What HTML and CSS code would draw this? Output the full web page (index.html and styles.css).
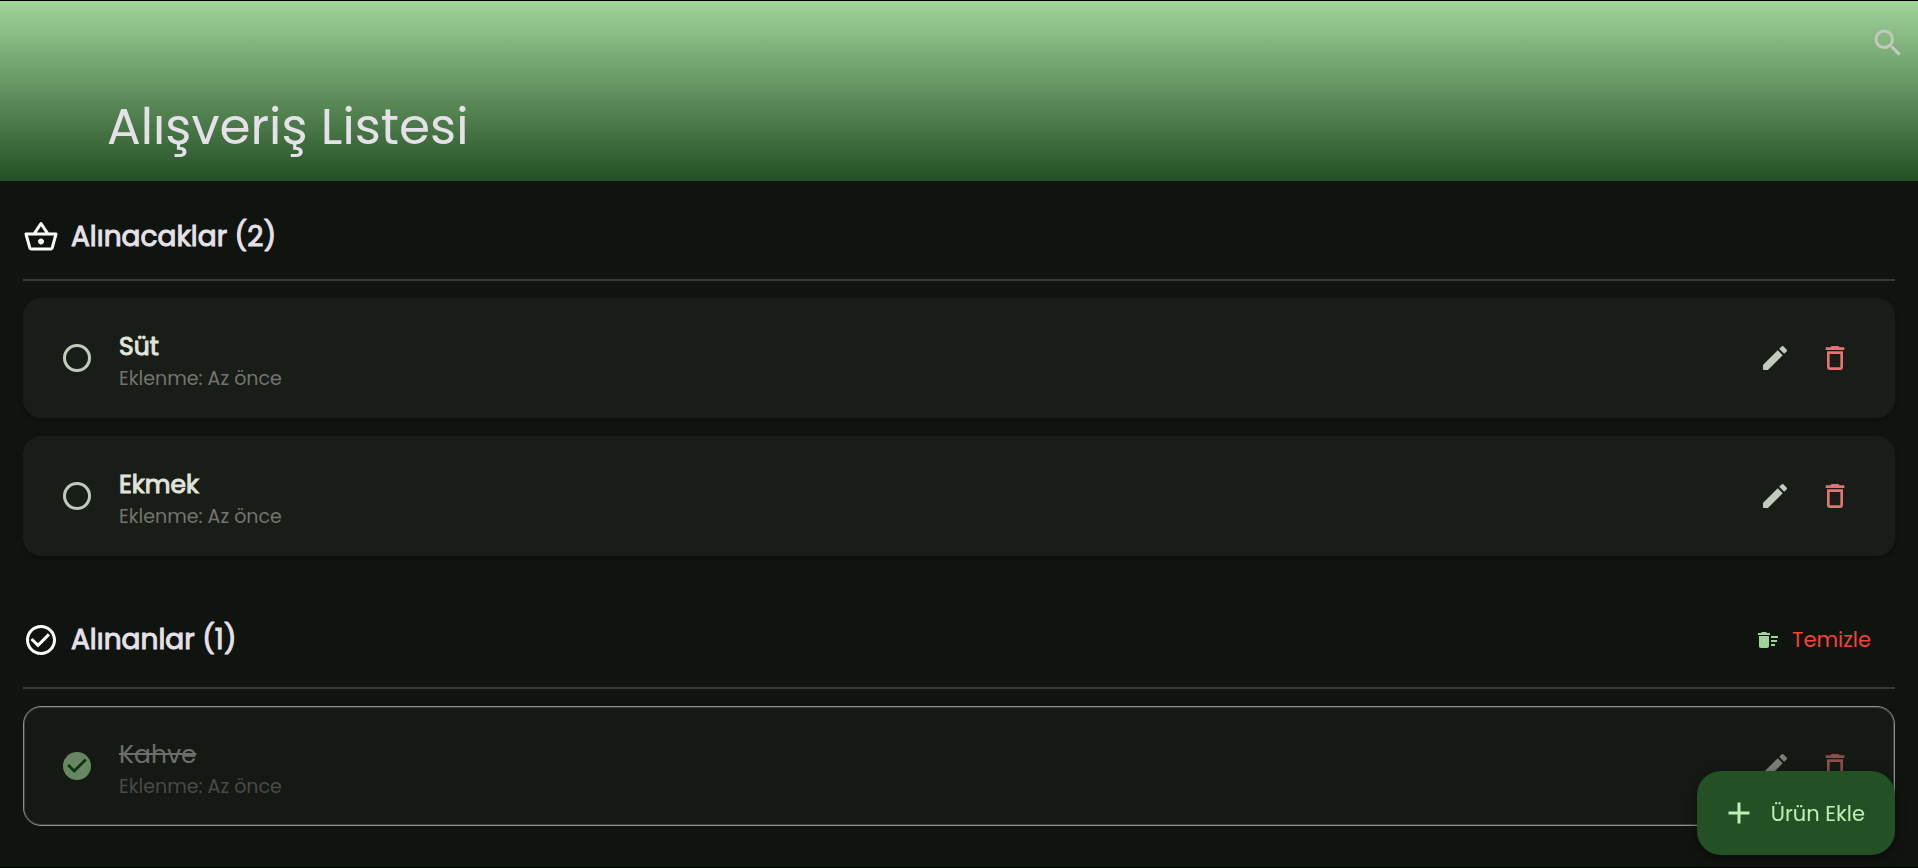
FILE: index.html
```html
<!DOCTYPE html>
<html lang="tr">
<head>
<meta charset="utf-8">
<meta name="viewport" content="width=device-width, initial-scale=1">
<title>Alışveriş Listesi</title>
<link rel="stylesheet" href="styles.css">
</head>
<body>
<svg class="sprite" aria-hidden="true">
  <symbol id="edit" viewBox="0 0 24 24"><path d="M3 17.46v3.04c0 .28.22.5.5.5h3.04c.13 0 .26-.05.35-.15L17.81 9.94l-3.75-3.75L3.15 17.1c-.1.1-.15.22-.15.36zM20.71 7.04c.39-.39.39-1.02 0-1.41l-2.34-2.34c-.39-.39-1.02-.39-1.41 0l-1.83 1.83 3.75 3.75 1.83-1.83z"/></symbol>
  <symbol id="delete" viewBox="0 0 24 24"><path d="M6 19c0 1.1.9 2 2 2h8c1.1 0 2-.9 2-2V7H6v12zM8 9h8v10H8V9zm7.5-5l-1-1h-5l-1 1H5v2h14V4h-3.5z"/></symbol>
</svg>

<header class="topbar">
  <h1 class="topbar-title">Alışveriş Listesi</h1>
  <button class="icon-button search" type="button" aria-label="Ara">
    <svg class="icon-lg" viewBox="0 0 24 24"><path d="M15.5 14h-.79l-.28-.27A6.471 6.471 0 0 0 16 9.5 6.5 6.5 0 1 0 9.5 16c1.61 0 3.09-.59 4.23-1.57l.27.28v.79l5 4.99L20.49 19l-4.99-5zm-6 0C7.01 14 5 11.99 5 9.5S7.01 5 9.5 5 14 7.01 14 9.5 11.99 14 9.5 14z"/></svg>
  </button>
</header>

<main class="content">
  <section class="group">
    <div class="group-head">
      <svg class="icon-lg" viewBox="0 0 24 24" aria-hidden="true"><path d="M22 9h-4.79l-4.38-6.56c-.19-.28-.51-.42-.83-.42s-.64.14-.83.43L6.79 9H2c-.55 0-1 .45-1 1 0 .09.01.18.04.27l2.54 9.27c.23.84 1 1.46 1.92 1.46h13c.92 0 1.69-.62 1.93-1.46l2.54-9.27L23 10c0-.55-.45-1-1-1zM12 4.8L14.8 9H9.2L12 4.8zM18.5 19l-12.99.01L3.31 11H20.7l-2.2 8zM12 13c-1.1 0-2 .9-2 2s.9 2 2 2 2-.9 2-2-.9-2-2-2z"/></svg>
      <h2 class="group-title">Alınacaklar (2)</h2>
    </div>
    <ul class="items">
      <li class="item">
        <input class="check" type="checkbox" id="sut">
        <div class="item-text">
          <label class="item-name" for="sut">Süt</label>
          <p class="item-meta">Eklenme: Az önce</p>
        </div>
        <button class="icon-button edit" type="button" aria-label="Süt düzenle"><svg class="icon-md"><use href="#edit"/></svg></button>
        <button class="icon-button delete" type="button" aria-label="Süt sil"><svg class="icon-md"><use href="#delete"/></svg></button>
      </li>
      <li class="item">
        <input class="check" type="checkbox" id="ekmek">
        <div class="item-text">
          <label class="item-name" for="ekmek">Ekmek</label>
          <p class="item-meta">Eklenme: Az önce</p>
        </div>
        <button class="icon-button edit" type="button" aria-label="Ekmek düzenle"><svg class="icon-md"><use href="#edit"/></svg></button>
        <button class="icon-button delete" type="button" aria-label="Ekmek sil"><svg class="icon-md"><use href="#delete"/></svg></button>
      </li>
    </ul>
  </section>

  <section class="group">
    <div class="group-head">
      <svg class="icon-lg" viewBox="0 0 24 24" aria-hidden="true"><path d="M16.59 7.58L10 14.17l-3.59-3.58L5 12l5 5 8-8zM12 2C6.48 2 2 6.48 2 12s4.48 10 10 10 10-4.48 10-10S17.52 2 12 2zm0 18c-4.42 0-8-3.58-8-8s3.58-8 8-8 8 3.58 8 8-3.58 8-8 8z"/></svg>
      <h2 class="group-title">Alınanlar (1)</h2>
      <button class="clear" type="button">
        <svg class="icon-sm" viewBox="0 0 24 24" aria-hidden="true"><path d="M15 16h4v2h-4zm0-8h7v2h-7zm0 4h6v2h-6zM3 18c0 1.100.9 2 2 2h6c1.100 0 2-.9 2-2V8H3v10zM14 5h-3l-1-1H6L5 5H2v2h12z"/></svg>
        Temizle
      </button>
    </div>
    <ul class="items">
      <li class="item done">
        <input class="check" type="checkbox" id="kahve" checked>
        <div class="item-text">
          <label class="item-name" for="kahve">Kahve</label>
          <p class="item-meta">Eklenme: Az önce</p>
        </div>
        <button class="icon-button edit" type="button" aria-label="Kahve düzenle"><svg class="icon-md"><use href="#edit"/></svg></button>
        <button class="icon-button delete" type="button" aria-label="Kahve sil"><svg class="icon-md"><use href="#delete"/></svg></button>
      </li>
    </ul>
  </section>
</main>

<button class="fab" type="button">
  <svg class="icon-lg" viewBox="0 0 24 24" aria-hidden="true"><path d="M19 13h-6v6h-2v-6H5v-2h6V5h2v6h6v2z"/></svg>
  Ürün Ekle
</button>
</body>
</html>
```
FILE: styles.css
```css
* {
  box-sizing: border-box;
  margin: 0;
  padding: 0;
}

body {
  min-height: 100vh;
  background: #10140f;
  border-top: 1px solid #000;
  border-bottom: 1px solid #000;
  color: #e6e0e9;
  font-family: Poppins, Inter, "Noto Sans", sans-serif;
}

button {
  border: 0;
  background: none;
  font: inherit;
  cursor: pointer;
}

svg {
  display: block;
  flex: none;
  fill: currentColor;
}

.sprite {
  position: absolute;
  width: 0;
  height: 0;
}

.icon-sm { width: 24px; height: 24px; }
.icon-md { width: 32px; height: 32px; }
.icon-lg { width: 36px; height: 36px; }

.topbar {
  display: flex;
  justify-content: space-between;
  align-items: flex-start;
  height: 180px;
  padding: 12px 0 0 107px;
  background: linear-gradient(#a1d39a, #235024);
}

.topbar-title {
  align-self: flex-end;
  padding-bottom: 22px;
  font-size: 50px;
  line-height: 64px;
  font-weight: 400;
}

.icon-button {
  display: grid;
  place-items: center;
  width: 60px;
  height: 60px;
}

.search { color: #c2c9bd; }

.content { padding: 36px 23px 40px; }

.group + .group { margin-top: 59px; }

.group-head {
  display: flex;
  align-items: center;
  gap: 12px;
  padding-bottom: 22px;
  border-bottom: 2px solid #363b35;
  color: #fff;
}

.group-title {
  flex: 1;
  color: #e6e0e9;
  font-size: 28px;
  line-height: 40px;
  font-weight: 400;
  -webkit-text-stroke: 1px currentColor;
}

.clear {
  display: flex;
  align-items: center;
  gap: 12px;
  padding: 0 24px;
  color: #f44336;
  font-size: 21px;
  line-height: 50px;
}

.clear svg { color: #a1d39a; }

.items {
  display: grid;
  gap: 18px;
  padding-top: 17px;
  list-style: none;
}

.item {
  display: flex;
  align-items: center;
  height: 120px;
  padding: 0 29px 0 39px;
  border: 1px solid transparent;
  border-radius: 18px;
  background: #191d17 border-box;
  box-shadow: 0 2px 4px rgba(0, 0, 0, 0.3);
}

.check {
  width: 28px;
  height: 28px;
  appearance: none;
  border: 3px solid #c2c9bd;
  border-radius: 50%;
}

.item-text {
  flex: 1;
  padding: 5px 28px 0;
}

.item-name {
  display: block;
  color: #e0e4da;
  font-size: 25px;
  line-height: 36px;
  font-weight: 400;
  -webkit-text-stroke: 1px currentColor;
}

.item-meta {
  color: #72756f;
  font-size: 19px;
  line-height: 27px;
}

.edit { color: #c2c9bd; }
.delete { color: #e57373; }

.done {
  border-color: #8b908a;
  background: #151914;
  box-shadow: inset 0 0 0 1px #3c403b;
}

.done .item-name {
  color: #6c6e6b;
  -webkit-text-stroke: 0;
  text-decoration: line-through;
}

.done .item-meta { color: #484b47; }
.done .edit { color: #7a7f77; }
.done .delete { color: #8f4e4c; }

.done .check {
  border: 0;
  background: #678762;
}

.done .check::before {
  content: "";
  display: block;
  width: 28px;
  height: 28px;
  background: #0b3510;
  clip-path: polygon(40% 75%, 15% 50%, 22% 43%, 40% 61%, 78% 23%, 85% 30%);
}

.fab {
  position: fixed;
  right: 23px;
  bottom: 13px;
  display: flex;
  align-items: center;
  gap: 14px;
  height: 84px;
  padding: 0 30px 0 24px;
  border-radius: 24px;
  background: #235024;
  box-shadow: 0 4px 12px rgba(0, 0, 0, 0.4);
  color: #bcf0b4;
  font-size: 21px;
}
```
